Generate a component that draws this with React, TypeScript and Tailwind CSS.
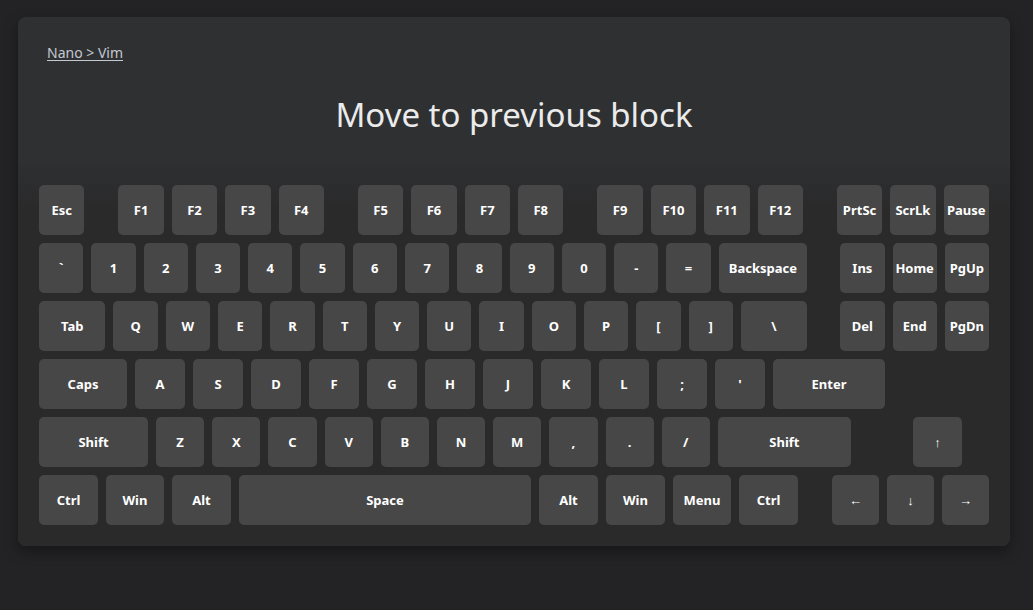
import React from "react";

// Keyboard cheat-sheet card: breadcrumb, command title, full keyboard.

type K = { label: string; grow?: number; w?: string };

const Key = ({ label, grow = 1, w }: K) => (
  <div
    className={
      "h-[50px] pt-px rounded-[5px] bg-[#474747] flex items-center justify-center text-[13px] font-bold text-white select-none " +
      (w ? w + " shrink-0" : "basis-0 min-w-0")
    }
    style={w ? undefined : { flexGrow: grow }}
  >
    {label}
  </div>
);

const Gap = ({ w }: { w: string }) => <div className={w + " shrink-0"} />;

export default function App() {
  return (
    <div
      className="min-h-[610px] w-full bg-[#232325] pt-[17px] pl-[18px]"
      style={{ fontFamily: '"Noto Sans", "Open Sans", sans-serif' }}
    >
      <div className="w-[992px] h-[529px] rounded-[8px] bg-[#2f3032] overflow-hidden flex flex-col shadow-[0_6px_14px_rgba(0,0,0,0.35)]">
        <div className="pt-[26px] pl-[29px] h-[147px] flex flex-col">
          <a
            href="#"
            className="text-[14px] leading-[19px] text-[#c4c8d2] underline underline-offset-2 self-start"
          >
            Nano &gt; Vim
          </a>
          <h1 className="mt-[31px] -ml-[29px] text-center text-[33px] leading-[44px] font-normal text-[#ebebeb]">
            Move to previous block
          </h1>
        </div>

        <div className="flex-1 bg-[#2b2b2c] bg-gradient-to-b from-[#2e2f31] to-[#2a2a2b] to-[12%] p-[21px] flex flex-col gap-2">
          {/* row 1 */}
          <div className="flex gap-2">
            <Key label="Esc" />
            <Gap w="w-[18px]" />
            <Key label="F1" />
            <Key label="F2" />
            <Key label="F3" />
            <Key label="F4" />
            <Gap w="w-[18px]" />
            <Key label="F5" />
            <Key label="F6" />
            <Key label="F7" />
            <Key label="F8" />
            <Gap w="w-[18px]" />
            <Key label="F9" />
            <Key label="F10" />
            <Key label="F11" />
            <Key label="F12" />
            <Gap w="w-[18px]" />
            <Key label="PrtSc" />
            <Key label="ScrLk" />
            <Key label="Pause" />
          </div>

          {/* row 2 */}
          <div className="flex gap-2">
            {["`", "1", "2", "3", "4", "5", "6", "7", "8", "9", "0", "-", "="].map((k) => (
              <Key key={k} label={k} />
            ))}
            <Key label="Backspace" grow={2} />
            <Gap w="w-[17px]" />
            <Key label="Ins" />
            <Key label="Home" />
            <Key label="PgUp" />
          </div>

          {/* row 3 */}
          <div className="flex gap-2">
            <Key label="Tab" grow={1.5} />
            {["Q", "W", "E", "R", "T", "Y", "U", "I", "O", "P", "[", "]"].map((k) => (
              <Key key={k} label={k} />
            ))}
            <Key label="\" grow={1.5} />
            <Gap w="w-[17px]" />
            <Key label="Del" />
            <Key label="End" />
            <Key label="PgDn" />
          </div>

          {/* row 4 */}
          <div className="flex gap-2">
            <Key label="Caps" w="w-[88px]" />
            {["A", "S", "D", "F", "G", "H", "J", "K", "L", ";", "'"].map((k) => (
              <Key key={k} label={k} w="w-[50px]" />
            ))}
            <Key label="Enter" w="w-[112px]" />
          </div>

          {/* row 5 */}
          <div className="flex gap-2">
            <Key label="Shift" w="w-[109px]" />
            {["Z", "X", "C", "V", "B", "N", "M", ",", ".", "/"].map((k) => (
              <Key key={k} label={k} w="w-[48.2px]" />
            ))}
            <Key label="Shift" w="w-[133px]" />
            <Gap w="w-[46px]" />
            <Key label="↑" w="w-[49px]" />
          </div>

          {/* row 6 */}
          <div className="flex gap-2">
            <Key label="Ctrl" w="w-[59px]" />
            <Key label="Win" w="w-[58px]" />
            <Key label="Alt" w="w-[59px]" />
            <Key label="Space" w="w-[292px]" />
            <Key label="Alt" w="w-[59px]" />
            <Key label="Win" w="w-[59px]" />
            <Key label="Menu" w="w-[58px]" />
            <Key label="Ctrl" w="w-[59px]" />
            <Gap w="w-[18px]" />
            <Key label="←" w="w-[47px]" />
            <Key label="↓" w="w-[47px]" />
            <Key label="→" w="w-[47px]" />
          </div>
        </div>
      </div>
    </div>
  );
}
